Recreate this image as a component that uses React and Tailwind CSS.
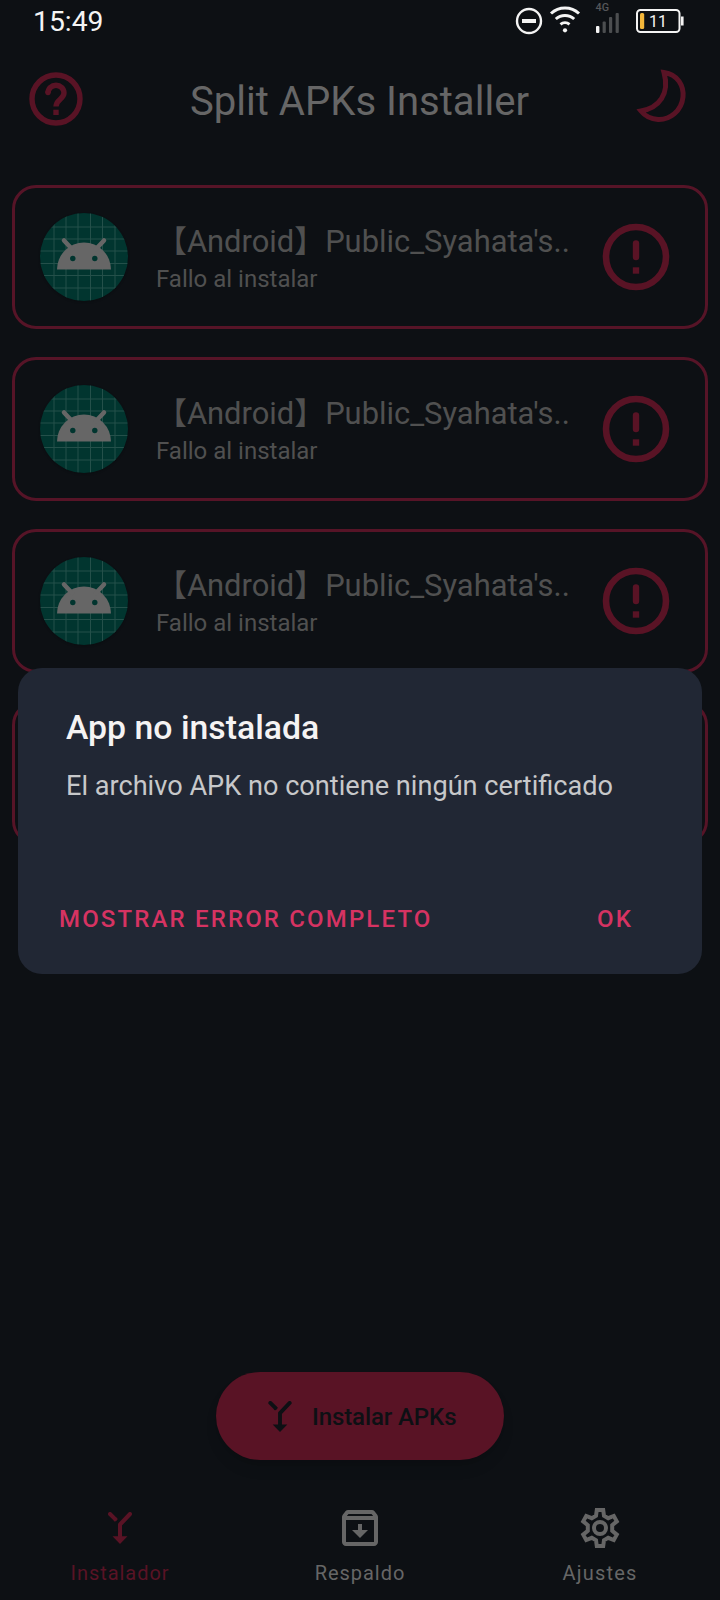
import React, { useState } from 'react';

const apks = [
    { id: 1, name: "【Android】Public_Syahata's..", status: 'Fallo al instalar' },
    { id: 2, name: "【Android】Public_Syahata's..", status: 'Fallo al instalar' },
    { id: 3, name: "【Android】Public_Syahata's..", status: 'Fallo al instalar' },
    { id: 4, name: '', status: '' },
];

const gridLines = [14, 26, 38, 50.5, 62.5, 75];

function SplitIcon({ className }) {
    return (
        <svg viewBox="0 0 24 32" className={className} fill="none" stroke="currentColor" strokeWidth="4">
            <path d="M2 2L7.2 7.2" strokeLinecap="round" />
            <path d="M7 7L8.3 8.3" />
            <path d="M22 2L12 12.5V25" strokeLinecap="round" strokeLinejoin="round" />
            <path d="M4.5 24.2H19.5L12 32Z" fill="currentColor" stroke="none" />
        </svg>
    );
}

function StatusBar() {
    return (
        <div className="flex h-11 items-center justify-between pl-[33px] pr-9 text-[#f4f4f4]">
            <span className="mt-px text-[28.3px] leading-none">15:49</span>
            <svg width="170" height="44" viewBox="514 0 170 44" fill="none">
                <circle cx="529" cy="21" r="12" stroke="currentColor" strokeWidth="2.4" />
                <path d="M522 21H536" stroke="currentColor" strokeWidth="4" />
                <g stroke="currentColor" strokeWidth="3">
                    <path d="M551 13.5A20.5 20.5 0 0 1 579 13.5" />
                    <path d="M555.8 19A13.5 13.5 0 0 1 574.2 19" />
                    <path d="M560.5 24.3A7 7 0 0 1 569.5 24.3" />
                </g>
                <circle cx="565" cy="30.3" r="2.1" fill="currentColor" />
                <text x="595.5" y="11.3" fontSize="10.8" fontWeight="500" fill="#55575a">4G</text>
                <g fill="#4c4e50">
                    <rect x="596" y="26" width="3.4" height="7" rx="1" fill="#f4f4f4" />
                    <rect x="602.6" y="21.5" width="3.2" height="11.5" rx="1" />
                    <rect x="609" y="17" width="3.2" height="16" rx="1" />
                    <rect x="615.6" y="13" width="3.2" height="20" rx="1" />
                </g>
                <rect x="637" y="10" width="42.5" height="22" rx="3.5" stroke="currentColor" strokeWidth="2" />
                <path d="M681 16.5H683.6V25.5H681Z" fill="currentColor" />
                <rect x="640" y="13" width="4.2" height="16" rx="1.5" fill="#f4b73a" />
                <text x="649" y="27" fontSize="16" fill="currentColor">11</text>
            </svg>
        </div>
    );
}

function Header() {
    return (
        <header className="flex h-[141px] items-start justify-between pl-[29px] pr-[33px] text-[#591325]">
            <svg width="54" height="54" viewBox="0 0 54 54" fill="none" stroke="currentColor" className="mt-7">
                <circle cx="27" cy="27" r="24" strokeWidth="5.4" />
                <path d="M19 21A8 7.8 0 0 1 35 21C35 27 27 27.5 27 34.5" strokeWidth="5.4" />
                <circle cx="19" cy="20.5" r="2.7" fill="currentColor" stroke="none" />
                <path d="M24.3 37.7H29.7V43H24.3Z" fill="currentColor" stroke="none" />
            </svg>
            <h1 className="mt-[34px] text-[40.1px] leading-[47px] text-[#666666]">Split APKs Installer</h1>
            <svg width="51" height="54" viewBox="0 0 51 54" fill="none" stroke="currentColor" className="mt-[25px]">
                <path
                    d="M28 3.5C42 5.5 48 17 47 28C45.5 42 34 51 22 50.5C15 50 9 47 5 42C23 39 34 25 28 3.5Z"
                    strokeWidth="5"
                />
            </svg>
        </header>
    );
}

function AppIcon() {
    return (
        <svg width="88" height="88" viewBox="0 0 88 88" className="shrink-0 rounded-full bg-[#01352f] shadow">
            {gridLines.map((pos) => (
                <path
                    key={pos}
                    d={`M${pos} 0V88M0 ${pos}H88`}
                    stroke="#24504a"
                    strokeWidth="1"
                />
            ))}
            <path d="M17 56.5A27 27 0 0 1 71 56.5Z" fill="#666666" />
            <path d="M24 27.5L32 36M64 27.5L56 36" stroke="#666666" strokeWidth="4.5" strokeLinecap="round" />
            <circle cx="32.8" cy="45.5" r="2.7" fill="#01352f" />
            <circle cx="54.8" cy="45.5" r="2.7" fill="#01352f" />
        </svg>
    );
}

function ApkCard({ apk }) {
    return (
        <div className="flex h-36 shrink-0 items-center rounded-3xl border-[3px] border-[#561427] pl-[25px] pr-[35px]">
            <AppIcon />
            <div className="ml-7 min-w-0 flex-1 pt-1 text-[#505050]">
                <p className="whitespace-nowrap text-[30.9px] leading-10">{apk.name}</p>
                <p className="text-2xl leading-[34px]">{apk.status}</p>
            </div>
            <svg width="68" height="68" viewBox="0 0 68 68" fill="none" stroke="currentColor" className="shrink-0 text-[#591325]">
                <circle cx="34" cy="34" r="30" strokeWidth="6.6" />
                <path d="M34 20.5V34" strokeWidth="6.4" strokeLinecap="round" />
                <path d="M30.8 44.3H37.2V50.7H30.8Z" fill="currentColor" stroke="none" />
            </svg>
        </div>
    );
}

function ErrorDialog({ onClose }) {
    return (
        <div className="absolute left-[18px] top-[668px] flex h-[306px] w-[684px] flex-col rounded-3xl bg-[#212734] pl-12 pr-[68px] pt-9">
            <h2 className="text-[33.8px] font-medium leading-[48px] text-[#f5f3f3]">App no instalada</h2>
            <p className="mt-3 whitespace-nowrap text-[27.15px] leading-[44px] text-[#c7c8ca]">
                El archivo APK no contiene ningún certificado
            </p>
            <div className="-ml-[7px] mt-[91px] flex justify-between text-2xl font-medium leading-10 tracking-[2.15px] text-[#d63362]">
                <button>MOSTRAR ERROR COMPLETO</button>
                <button onClick={onClose} className="mr-px">OK</button>
            </div>
        </div>
    );
}

function BottomNav() {
    return (
        <nav className="flex h-[120px] pt-6 text-xl leading-6 tracking-[0.95px] text-[#666666]">
            <div className="flex flex-1 flex-col items-center text-[#591325]">
                <div className="flex h-12 items-center">
                    <SplitIcon className="h-8 w-6" />
                </div>
                <span className="mt-[9px]">Instalador</span>
            </div>
            <div className="flex flex-1 flex-col items-center">
                <div className="flex h-12 items-center">
                    <svg viewBox="0 0 24 24" fill="currentColor" className="h-12 w-12">
                        <path d="M20.54 5.23l-1.39-1.68C18.88 3.21 18.47 3 18 3H6c-.47 0-.88.21-1.16.55L3.46 5.23C3.17 5.57 3 6.02 3 6.5V19c0 1.1.9 2 2 2h14c1.1 0 2-.9 2-2V6.5c0-.48-.17-.93-.46-1.27zM6.24 5h11.52l.83 1H5.42l.82-1zM5 19V8h14v11H5zm8-9h-2v3H8l4 4 4-4h-3z" />
                    </svg>
                </div>
                <span className="mt-[9px]">Respaldo</span>
            </div>
            <div className="flex flex-1 flex-col items-center">
                <div className="flex h-12 items-center">
                    <svg viewBox="0 0 24 24" fill="none" stroke="currentColor" strokeWidth="2" className="h-12 w-12">
                        <path d="M10.4 3H13.6L14 5.9L16.1 7.1L18.9 6L20.4 8.7L18.1 10.6V13.4L20.4 15.3L18.9 18L16.1 16.9L14 18.1L13.6 21H10.4L10 18.1L7.9 16.9L5.1 18L3.6 15.3L5.9 13.4V10.6L3.6 8.7L5.1 6L7.9 7.1L10 5.9Z" />
                        <circle cx="12" cy="12" r="3" />
                    </svg>
                </div>
                <span className="mt-[9px] tracking-[1.2px]">Ajustes</span>
            </div>
        </nav>
    );
}

export default function App() {
    const [isDialogOpen, setIsDialogOpen] = useState(true);

    return (
        <div className="relative flex h-[1600px] w-[720px] flex-col overflow-hidden bg-[#0d1014] font-[Roboto,'Noto_Sans_CJK_JP',sans-serif]">
            <StatusBar />
            <Header />
            <main className="flex flex-1 flex-col gap-7 px-3">
                {apks.map((apk) => (
                    <ApkCard key={apk.id} apk={apk} />
                ))}
            </main>
            <button className="mx-auto mb-5 flex h-[88px] w-72 items-center rounded-full bg-[#591325] pl-[52px] text-2xl font-medium text-[#0d1014] shadow-lg">
                <SplitIcon className="h-[31px] w-6" />
                <span className="ml-5 mt-0.5 tracking-[-0.1px]">Instalar APKs</span>
            </button>
            <BottomNav />
            {isDialogOpen && <ErrorDialog onClose={() => setIsDialogOpen(false)} />}
        </div>
    );
}
